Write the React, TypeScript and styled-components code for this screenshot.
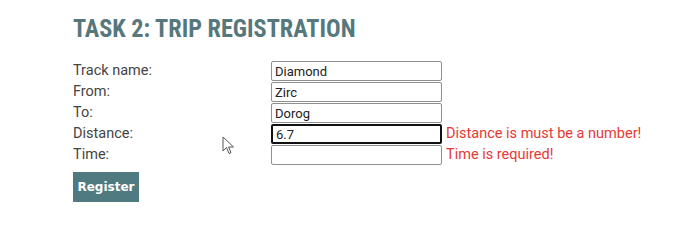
import React from "react";
import styled, { createGlobalStyle } from "styled-components";

const GlobalStyle = createGlobalStyle`
  html, body {
    margin: 0;
    padding: 0;
    background: #ffffff;
  }
  body {
    font-family: Roboto, "Liberation Sans", sans-serif;
  }
`;

const Page = styled.div`
  position: relative;
  width: 700px;
  height: 241px;
  padding: 14px 0 0 73px;
  box-sizing: border-box;
`;

const Title = styled.h2`
  margin: 0 0 19px;
  font-family: Roboto, "Liberation Sans", sans-serif;
  font-stretch: condensed;
  font-weight: 700;
  font-size: 26.5px;
  line-height: 28px;
  color: #56787d;
  white-space: nowrap;
  transform: scaleX(0.915);
  transform-origin: left center;
`;

const Form = styled.form`
  display: grid;
  grid-template-columns: 198px 171px auto;
  row-gap: 1px;
  align-items: center;
`;

const Label = styled.label`
  font-size: 14.5px;
  line-height: 20px;
  color: #444;
`;

const Input = styled.input<{ $focused?: boolean }>`
  box-sizing: border-box;
  width: 171px;
  height: 20px;
  margin: 0;
  padding: 0 3px;
  font-family: Roboto, "Liberation Sans", sans-serif;
  font-size: 13px;
  color: #222;
  border: ${(p) => (p.$focused ? "2px solid #111" : "1px solid #8f8f8f")};
  border-radius: 2px;
  outline: none;
  background: #fff;
`;

const Error = styled.span`
  padding-left: 4px;
  font-size: 14.5px;
  line-height: 20px;
  color: #e53935;
  white-space: nowrap;
`;

const Button = styled.button`
  margin-top: 7px;
  width: 66px;
  height: 30px;
  padding: 0;
  border: none;
  background: #4f7b80;
  color: #fff;
  font-family: "DejaVu Sans", Roboto, sans-serif;
  font-weight: 700;
  font-size: 12px;
`;

const Cursor = styled.svg`
  position: absolute;
  left: 222px;
  top: 136px;
`;

const fields = [
  { label: "Track name:", value: "Diamond" },
  { label: "From:", value: "Zirc" },
  { label: "To:", value: "Dorog" },
  { label: "Distance:", value: "6.7", focused: true, error: "Distance is must be a number!" },
  { label: "Time:", value: "", error: "Time is required!" },
];

export default function App() {
  return (
    <>
      <GlobalStyle />
      <Page>
        <Title>TASK 2: TRIP REGISTRATION</Title>
        <Form onSubmit={(e) => e.preventDefault()}>
          {fields.map((f) => (
            <React.Fragment key={f.label}>
              <Label>{f.label}</Label>
              <Input defaultValue={f.value} $focused={f.focused} />
              <Error>{f.error ?? ""}</Error>
            </React.Fragment>
          ))}
        </Form>
        <Button type="button">Register</Button>
        <Cursor width="14" height="20" viewBox="0 0 14 20">
          <path
            d="M1 1 L1 15 L4.5 11.5 L7 17.5 L9 16.7 L6.6 11 L11.5 11 Z"
            fill="#fff"
            stroke="#555"
            strokeWidth="1"
            strokeLinejoin="round"
          />
        </Cursor>
      </Page>
    </>
  );
}
